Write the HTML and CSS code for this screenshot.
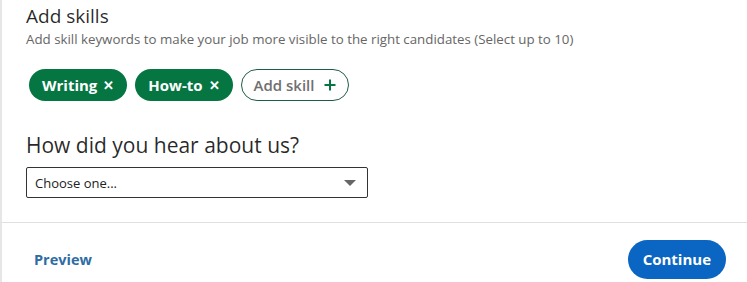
FILE: index.html
```html
<!DOCTYPE html>
<html>
<head>
<meta charset="utf-8">
<link rel="stylesheet" href="styles.css">
</head>
<body>
<div class="page">
  <section class="content">
    <h2 class="title">Add skills</h2>
    <p class="hint">Add skill keywords to make your job more visible to the right candidates (Select up to 10)</p>
    <div class="chips">
      <span class="chip chip-on">Writing <span class="x">✕</span></span>
      <span class="chip chip-on">How-to <span class="x">✕</span></span>
      <span class="chip chip-add">Add skill <svg class="plus" width="12" height="12" viewBox="0 0 12 12"><path d="M6 0.5v11M0.5 6h11" stroke="#057642" stroke-width="2"/></svg></span>
    </div>
    <h2 class="title title2">How did you hear about us?</h2>
    <div class="select">
      <span>Choose one...</span>
      <svg class="caret" width="12" height="6" viewBox="0 0 12 6"><path d="M0 0h12L6 6z" fill="#666"/></svg>
    </div>
  </section>
  <footer class="footer">
    <span class="preview">Preview</span>
    <span class="continue">Continue</span>
  </footer>
</div>
</body>
</html>
```
FILE: styles.css
```css
html, body { margin: 0; padding: 0; background: #fff; }
body { font-family: "Open Sans", "Noto Sans", sans-serif; color: rgba(0,0,0,0.9); }
.page {
  width: 747px; height: 282px; box-sizing: border-box;
  border-left: 2px solid #e6e6e6;
  display: flex; flex-direction: column;
}
.content { padding: 2px 0 0 24px; height: 222px; box-sizing: border-box; }
.title { margin: 0; font-size: 19px; font-weight: 400; line-height: 28px; color: rgba(0,0,0,0.85); }
.hint { margin: 0; font-size: 13.3px; line-height: 18px; color: #666; }
.chips { display: flex; gap: 8px; margin: 21px 0 0 3px; }
.chip {
  height: 32px; box-sizing: border-box; border-radius: 16px;
  display: inline-flex; align-items: center; gap: 6px;
  padding: 0 13px; font-size: 15px; font-weight: 700;
}
.chip-on { background: #057642; color: #fff; }
.x { font-size: 13px; font-weight: 700; }
.chip-add { border: 1px solid #1e5e44; color: #707070; padding: 0 12px 0 12px; gap: 10px; font-weight: 600; }
.title2 { margin-top: 29px; font-size: 21px; line-height: 30px; }
.select {
  margin-top: 7px; width: 342px; height: 31px; box-sizing: border-box;
  border: 1px solid #333; border-radius: 2px;
  display: flex; align-items: center; justify-content: space-between;
  padding: 0 11px 0 8px; font-size: 13px; color: #222;
}
.footer {
  border-top: 1px solid #e0e0e0; flex: 1;
  display: flex; align-items: center; justify-content: space-between;
  padding: 13px 21px 0 32px;
}
.preview { color: #2e6ca4; font-size: 14.5px; font-weight: 700; }
.continue {
  background: #0a66c2; color: #fff; font-size: 15px; font-weight: 700;
  height: 39px; border-radius: 20px; padding: 0 15px;
  display: inline-flex; align-items: center;
}
```
